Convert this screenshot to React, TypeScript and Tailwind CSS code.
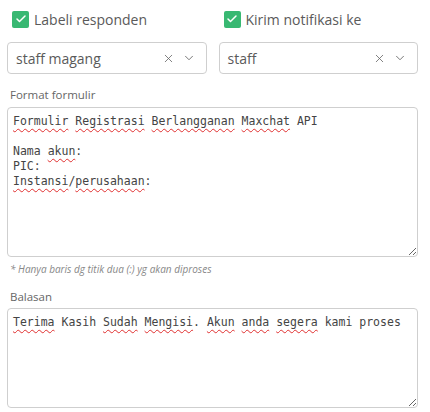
import { X, ChevronDown, Check } from "lucide-react"

const ui = { fontFamily: '"Open Sans", "Noto Sans", sans-serif' }
const mono = { fontFamily: '"DejaVu Sans Mono", "Liberation Mono", monospace' }

function Typo({ children }: { children: React.ReactNode }) {
  return (
    <span className="underline decoration-wavy decoration-[#e03030] decoration-1 underline-offset-[3px]">
      {children}
    </span>
  )
}

function CheckField({ label, value }: { label: string; value: string }) {
  return (
    <div className="flex flex-col">
      <label className="flex items-center gap-[5px] pl-[5px] h-[18px]">
        <span className="w-[17px] h-[17px] rounded-[2px] bg-[#38b872] flex items-center justify-center">
          <Check size={12} strokeWidth={3} className="text-white" />
        </span>
        <span className="text-[14px] text-[#5a5a5a]">{label}</span>
      </label>
      <div className="mt-[14px] h-[32px] rounded-[4px] border border-[#cfcfcf] flex items-center pl-[8px] pr-[10px]">
        <span className="flex-1 text-[14px] text-[#5a5a5a]">{value}</span>
        <X size={13} strokeWidth={1.5} className="text-[#666] mr-[7px]" />
        <ChevronDown size={14} strokeWidth={1.5} className="text-[#666]" />
      </div>
    </div>
  )
}

export default function App() {
  return (
    <div className="w-[430px] h-[412px] bg-white pl-[7px] pr-[12px] pt-[10px] overflow-hidden" style={ui}>
      <div className="grid grid-cols-2 gap-x-[12px]">
        <CheckField label="Labeli responden" value="staff magang" />
        <CheckField label="Kirim notifikasi ke" value="staff" />
      </div>

      <div className="mt-[14px] pl-[3px] text-[11.5px] leading-[14px] text-[#666]">Format formulir</div>
      <div
        className="mt-[5px] h-[150px] rounded-[4px] border border-[#cfcfcf] px-[5px] py-[6px] text-[11.5px] leading-[15px] text-[#444] whitespace-pre resize-y overflow-auto"
        style={mono}
      >
        <Typo>Formulir</Typo> <Typo>Registrasi</Typo> <Typo>Berlangganan</Typo> <Typo>Maxchat</Typo> API
        {"\n\n"}Nama <Typo>akun</Typo>:{"\n"}PIC:{"\n"}
        <Typo>Instansi</Typo>/<Typo>perusahaan</Typo>:
      </div>
      <div className="mt-[6px] pl-[3px] text-[10px] leading-[13px] italic text-[#888]">
        * Hanya baris dg titik dua (:) yg akan diproses
      </div>

      <div className="mt-[14px] pl-[3px] text-[11.5px] leading-[14px] text-[#666]">Balasan</div>
      <div
        className="mt-[4px] h-[100px] rounded-[4px] border border-[#cfcfcf] px-[5px] py-[6px] text-[11.5px] leading-[15px] text-[#444] whitespace-pre resize-y overflow-auto"
        style={mono}
      >
        <Typo>Terima</Typo> Kasih <Typo>Sudah</Typo> <Typo>Mengisi</Typo>. <Typo>Akun</Typo> <Typo>anda</Typo>{" "}
        <Typo>segera</Typo> kami proses
      </div>
    </div>
  )
}
